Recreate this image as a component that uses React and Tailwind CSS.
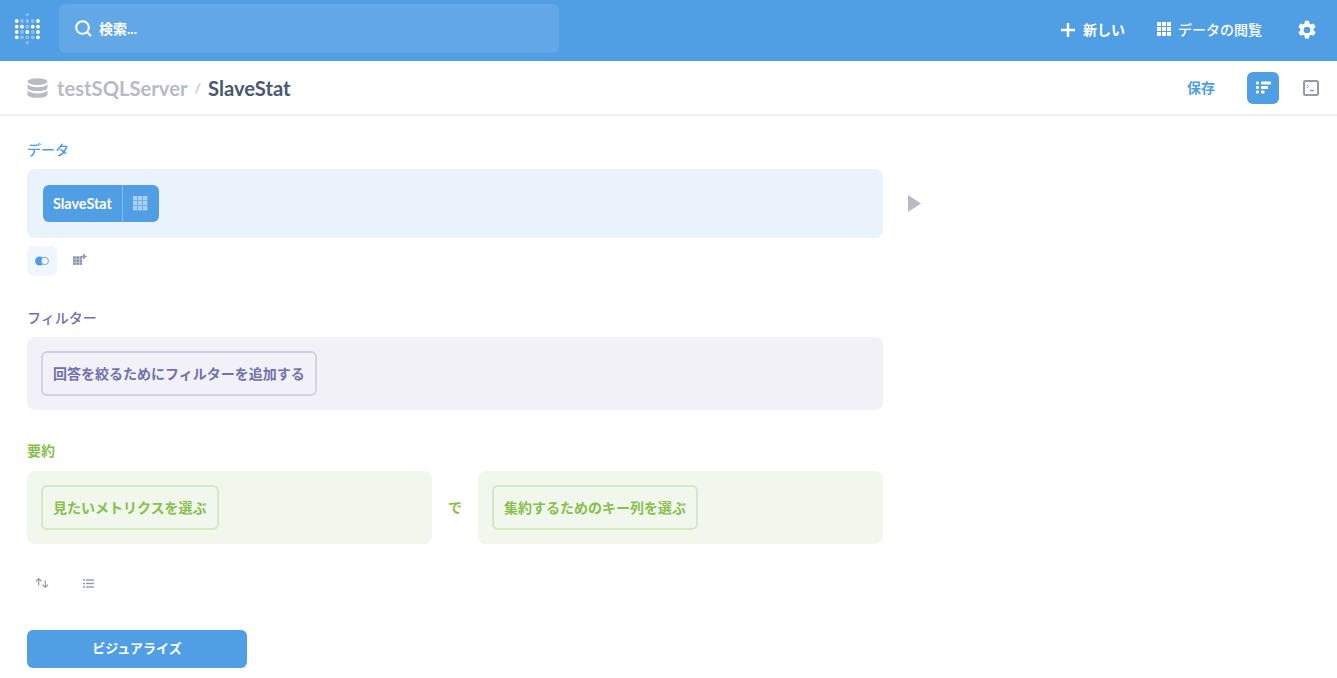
// Metabase style dotted logo
function Logo() {
  const cols = [2.7, 8, 13.3, 18.7, 24];
  const rows = [9, 14.7, 20, 25.3];
  const lit = ["10001", "11011", "10101", "10001"];
  return (
    <svg width="26" height="33" viewBox="0 0 26 33" fill="white">
      <circle cx="13.3" cy="2.7" r="1.8" opacity="0.3" />
      <circle cx="13.3" cy="30.7" r="1.8" opacity="0.3" />
      {rows.map((y, r) =>
        cols.map((x, c) => (
          <circle key={`${r}-${c}`} cx={x} cy={y} r="1.9" opacity={lit[r][c] === "1" ? 1 : 0.35} />
        ))
      )}
    </svg>
  );
}

function GridIcon({ size = 16, gap = 1, className = "" }) {
  const cells = [];
  const step = size / 3;
  for (let r = 0; r < 3; r++) {
    for (let c = 0; c < 3; c++) {
      cells.push(<rect key={`${r}-${c}`} x={c * step} y={r * step} width={step - gap} height={step - gap} />);
    }
  }
  return (
    <svg width={size} height={size} viewBox={`0 0 ${size} ${size}`} fill="currentColor" className={className}>
      {cells}
    </svg>
  );
}

function GearIcon() {
  return (
    <svg width="20" height="20" viewBox="0 0 24 24" fill="white">
      <path
        fillRule="evenodd"
        d="M9.6 1h4.8l.6 3.2c.7.3 1.3.6 1.9 1.1l3.1-1.1 2.4 4.2-2.5 2.1c.1.7.1 1.4 0 2.1l2.5 2.1-2.4 4.2-3.1-1.1c-.6.5-1.2.8-1.9 1.1l-.6 3.2H9.6l-.6-3.2c-.7-.3-1.3-.6-1.9-1.1l-3.1 1.1-2.4-4.2 2.5-2.1c-.1-.7-.1-1.4 0-2.1L1.6 8.4 4 4.2l3.1 1.1c.6-.5 1.2-.8 1.9-1.1zM12 8a4 4 0 1 0 0 8 4 4 0 0 0 0-8z"
      />
    </svg>
  );
}

function DatabaseIcon() {
  return (
    <svg width="21" height="20" viewBox="0 0 21 20" fill="#b8bbc3">
      <ellipse cx="10.5" cy="3.6" rx="10" ry="3.4" />
      <path d="M.5 6.3c1.5 2 5.5 3 10 3s8.5-1 10-3v3.4c0 1.9-4.5 3.4-10 3.4S.5 11.6.5 9.7z" />
      <path d="M.5 12.5c1.5 2 5.5 3 10 3s8.5-1 10-3v3.9c0 1.9-4.5 3.4-10 3.4S.5 18.300.5 16.400z" />
    </svg>
  );
}

function NotebookIcon() {
  return (
    <svg width="15" height="13" viewBox="0 0 15 13" fill="white">
      <rect x="0" y="0.5" width="3" height="3" rx="1.2" />
      <rect x="5" y="0.5" width="10" height="3" rx="0.8" />
      <rect x="0" y="5" width="3" height="3" rx="1.2" />
      <rect x="5" y="5" width="7" height="3" rx="0.8" />
      <rect x="0" y="9.5" width="3" height="3" rx="1.2" />
      <rect x="5" y="9.5" width="3.5" height="3" rx="0.8" />
    </svg>
  );
}

function SqlIcon() {
  return (
    <svg width="16" height="16" viewBox="0 0 16 16" fill="none" stroke="#949aab" strokeWidth="2">
      <rect x="1" y="1" width="14" height="14" rx="1.5" />
      <path d="M4 5l1.5 1.5L4 8" strokeWidth="1" />
      <path d="M7 10.5h4" strokeWidth="1.5" />
    </svg>
  );
}

function JoinIcon() {
  return (
    <svg width="14" height="10" viewBox="0 0 14 10">
      <circle cx="4.6" cy="5" r="4.5" fill="#509ee3" />
      <circle cx="9.8" cy="5" r="3.7" fill="#f0f6fc" stroke="#509ee3" strokeWidth="0.8" />
    </svg>
  );
}

function CustomColumnIcon() {
  return (
    <svg width="14" height="11" viewBox="0 0 14 11" fill="#8f96a3">
      {[0, 1, 2].map((r) =>
        [0, 1, 2].map((c) => <rect key={`${r}${c}`} x={c * 3.2} y={2.3 + r * 3} width="2.8" height="2.6" />)
      )}
      <path d="M10.2 0h1.6v1.800h2v1.500h-2v1.800h-1.600V3.300h-1.900V1.800h1.900z" />
    </svg>
  );
}

function SortIcon() {
  return (
    <svg width="14" height="10" viewBox="0 0 14 10" fill="none" stroke="#949aab" strokeWidth="1.2">
      <path d="M3.7 7.5V.8M1 3.2L3.7.6l2.7 2.600" />
      <path d="M10.3 2.500v6.700M7.600 6.800l2.700 2.600L13 6.800" />
    </svg>
  );
}

function ListIcon() {
  return (
    <svg width="11" height="9" viewBox="0 0 11 9" fill="#949aab">
      <circle cx="1" cy="1" r="1" />
      <circle cx="1" cy="4.5" r="1" />
      <circle cx="1" cy="8" r="1" />
      <rect x="3" y="0.3" width="8" height="1.4" />
      <rect x="3" y="3.8" width="8" height="1.4" />
      <rect x="3" y="7.3" width="8" height="1.4" />
    </svg>
  );
}

function TopBar() {
  return (
    <header className="flex h-[61px] items-center bg-[#509ee3] pb-[2px] text-white">
      <div className="mb-[2px] flex w-[59px] justify-center pr-[5px]">
        <Logo />
      </div>
      <div className="mb-[2px] flex h-[49px] w-[500px] items-center rounded-md bg-[#62a8e6] pl-[16px] text-[14px] font-bold">
        <svg width="17" height="17" viewBox="0 0 17 17" fill="none" stroke="white" strokeWidth="2">
          <circle cx="7.5" cy="7.5" r="6.3" />
          <path d="M12 12l4 4" />
        </svg>
        <span className="ml-[7px]">検索...</span>
      </div>
      <div className="ml-auto flex items-center pr-[20px] text-[14px] font-bold">
        <svg width="14" height="14" viewBox="0 0 14 14" fill="white">
          <path d="M5.8 0h2.4v5.8H14v2.4H8.2V14H5.8V8.2H0V5.8h5.8z" />
        </svg>
        <span className="ml-[8px]">新しい</span>
        <GridIcon size={15} className="ml-[32px]" />
        <span className="ml-[6px] font-medium">データの閲覧</span>
        <span className="ml-[35px] flex">
          <GearIcon />
        </span>
      </div>
    </header>
  );
}

function SubHeader() {
  return (
    <div className="flex h-[55px] items-center border-b-2 border-[#f0f0f0] pl-[27px] pr-[18px]">
      <DatabaseIcon />
      <span className="ml-[9px] pt-[1px] text-[20.2px] font-bold text-[#b8bbc3]">testSQLServer</span>
      <span className="ml-[7px] text-[14px] font-bold text-[#c6c9d2]">/</span>
      <span className="ml-[7px] pt-[1px] text-[20.2px] font-bold text-[#4c5773]">SlaveStat</span>
      <span className="ml-auto text-[14px] font-bold text-[#509ee3]">保存</span>
      <span className="ml-[32px] flex h-[32px] w-[32px] items-center justify-center rounded-md bg-[#509ee3]">
        <NotebookIcon />
      </span>
      <span className="ml-[24px] flex">
        <SqlIcon />
      </span>
    </div>
  );
}

function Section({ label, color, children, className = "" }) {
  return (
    <section className={className}>
      <div className={`text-[14px] leading-[20px] ${color}`}>{label}</div>
      {children}
    </section>
  );
}

function AddButton({ children, className }) {
  return (
    <span className={`inline-flex h-[45px] items-center rounded-md border-2 px-[10px] text-[14px] font-bold ${className}`}>
      {children}
    </span>
  );
}

export default function App() {
  return (
    <div
      className="h-[678px] overflow-hidden bg-white"
      style={{ fontFamily: 'Lato, "Noto Sans CJK JP", sans-serif' }}
    >
      <TopBar />
      <SubHeader />
      <main className="px-[27px] pt-[24px]">
        <Section label="データ" color="font-medium text-[#509ee3]">
          <div className="mt-[9px] flex items-center">
            <div className="flex h-[69px] w-[856px] items-center rounded-lg bg-[#eaf3fc] px-[16px]">
              <div className="flex h-[37px] items-center rounded-md bg-[#509ee3] text-[14.4px] font-bold text-white">
                <span className="px-[10px]">SlaveStat</span>
                <span className="flex h-full w-[37px] items-center justify-center border-l border-[#85bbeb]">
                  <GridIcon size={15} gap={0.6} className="text-[#a8cff1]" />
                </span>
              </div>
            </div>
            <svg width="13" height="17" viewBox="0 0 13 17" fill="#b8bbc3" className="ml-[25px]">
              <path d="M0 0l13 8.5L0 17z" />
            </svg>
          </div>
          <div className="mt-[8px] flex items-center">
            <span className="flex h-[30px] w-[30px] items-center justify-center rounded-md bg-[#f0f6fc]">
              <JoinIcon />
            </span>
            <span className="mb-[3px] ml-[16px] flex">
              <CustomColumnIcon />
            </span>
          </div>
        </Section>

        <Section label="フィルター" color="font-medium text-[#7172ad]" className="mt-[32px]">
          <div className="mt-[9px] flex h-[73px] w-[856px] items-center rounded-lg bg-[#f1f1f7] px-[14px]">
            <AddButton className="border-[#d2d2e6] text-[#7172ad]">回答を絞るためにフィルターを追加する</AddButton>
          </div>
        </Section>

        <Section label="要約" color="font-bold text-[#88bf4d]" className="mt-[31px]">
          <div className="mt-[10px] flex w-[856px] items-center">
            <div className="flex h-[73px] w-[405px] items-center rounded-lg bg-[#f1f7ec] px-[14px]">
              <AddButton className="border-[#d5e7c3] text-[#88bf4d]">見たいメトリクスを選ぶ</AddButton>
            </div>
            <span className="w-[46px] text-center text-[14px] font-bold text-[#88bf4d]">で</span>
            <div className="flex h-[73px] flex-1 items-center rounded-lg bg-[#f1f7ec] px-[14px]">
              <AddButton className="border-[#d5e7c3] text-[#88bf4d]">集約するためのキー列を選ぶ</AddButton>
            </div>
          </div>
        </Section>

        <div className="mt-[34px] flex items-center pl-[8px]">
          <SortIcon />
          <span className="ml-[34px] flex">
            <ListIcon />
          </span>
        </div>

        <button className="mt-[42px] flex h-[38px] w-[220px] items-center justify-center rounded-md bg-[#509ee3] text-[13px] font-bold text-white">
          ビジュアライズ
        </button>
      </main>
    </div>
  );
}
